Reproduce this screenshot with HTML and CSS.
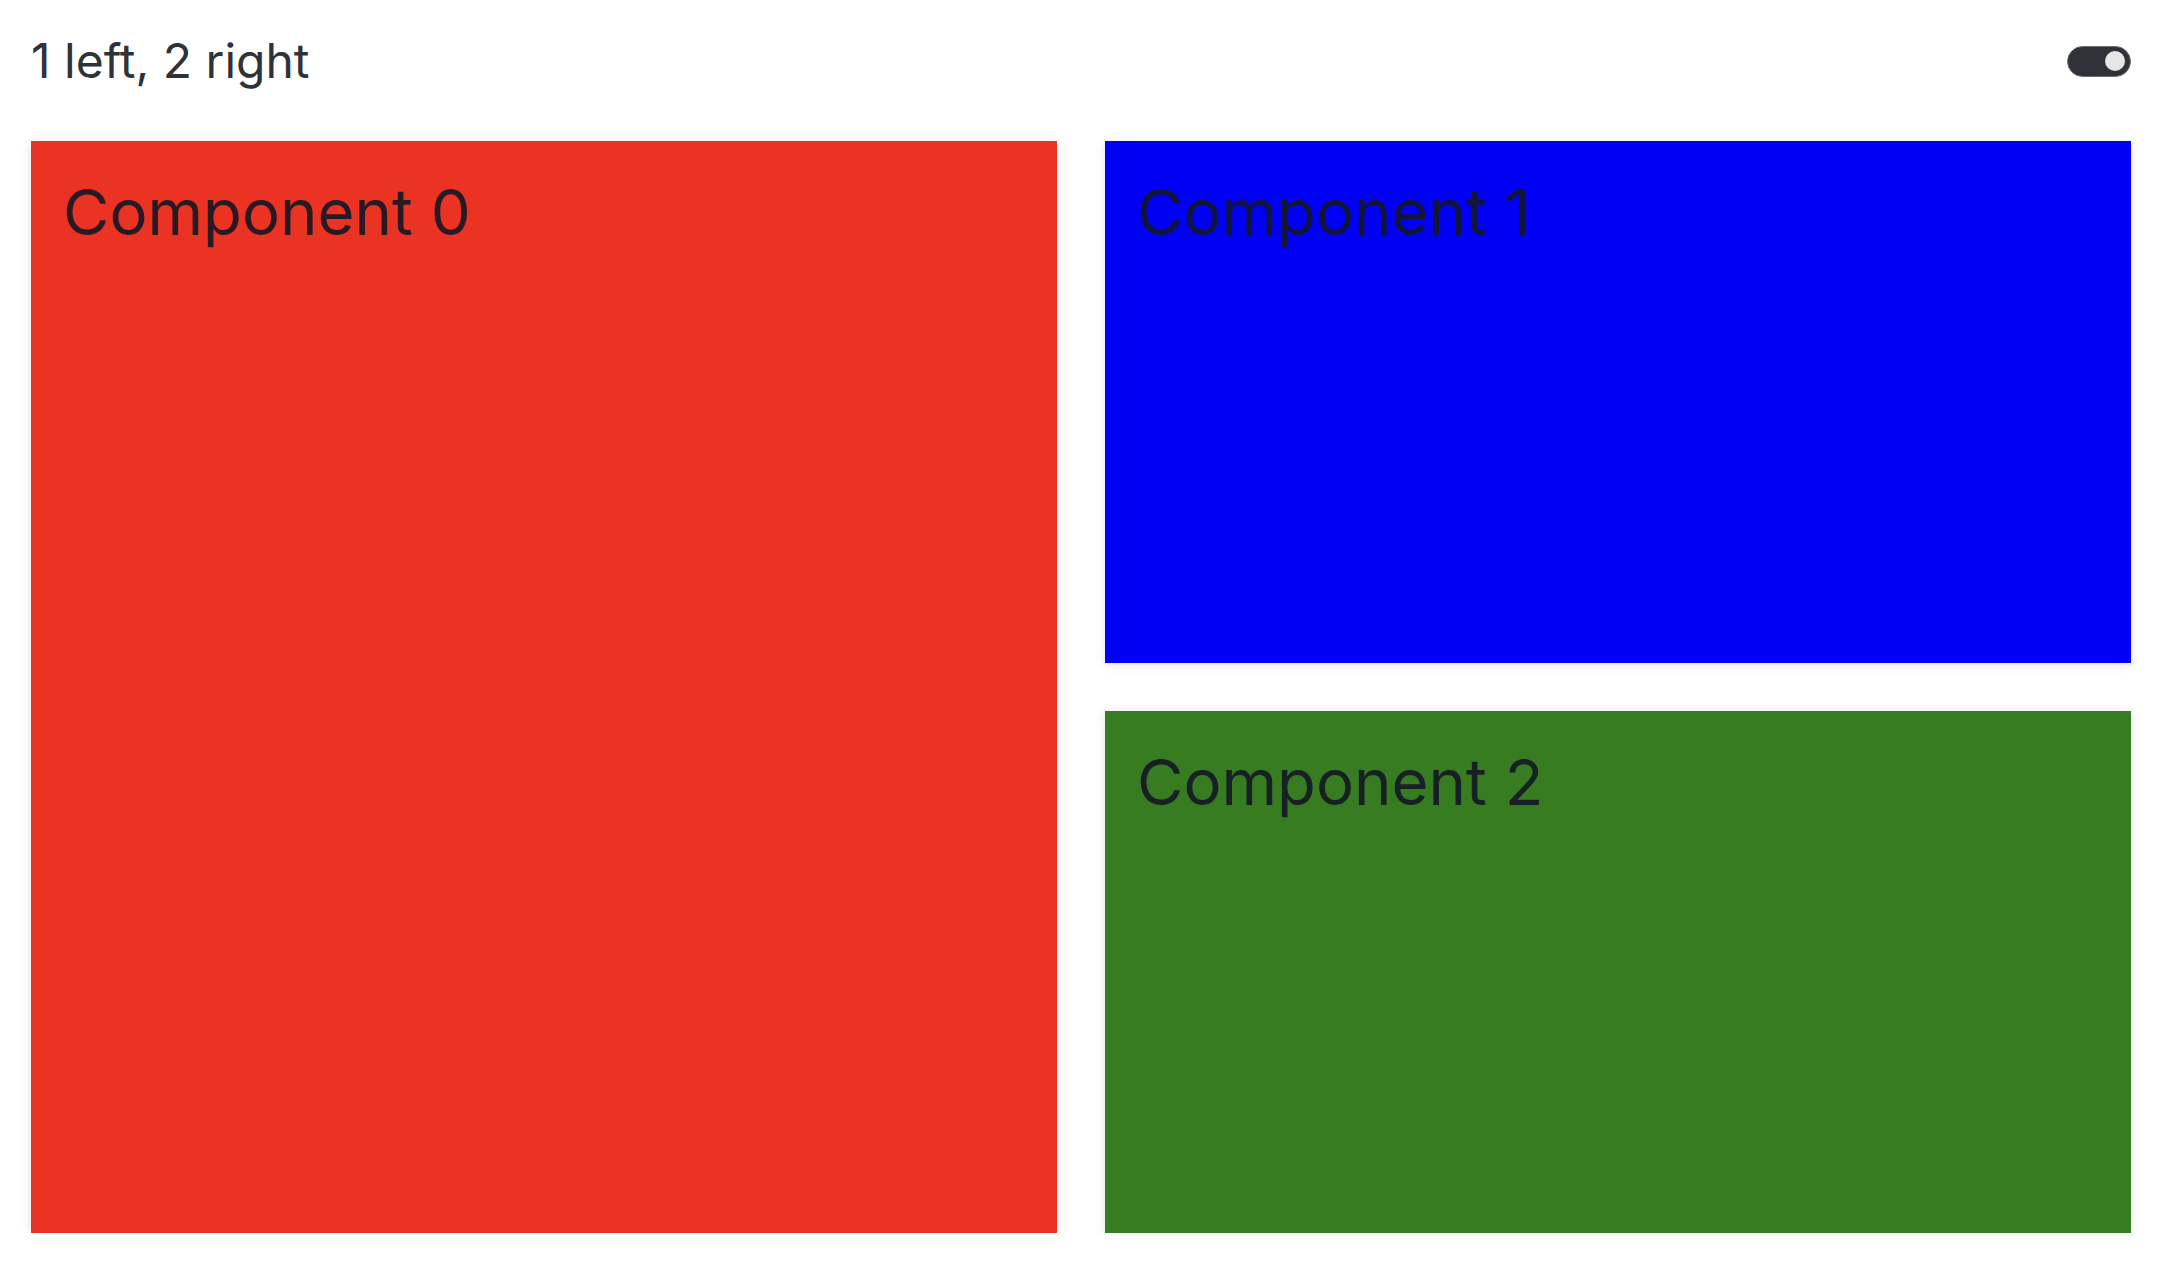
FILE: index.html
```html
<!DOCTYPE html>
<html lang="en">
    <head>
        <meta charset="utf-8"/>
        <title>1 left, 2 right</title>
        <link rel="stylesheet" href="styles.css">
    </head>
    <body>
        <div class="page">
            <div class="topbar">
                <h1 class="title">1 left, 2 right</h1>
                <div class="switch"><span class="knob"></span></div>
            </div>
            <div class="layout">
                <div class="panel red tall">Component 0</div>
                <div class="panel blue">Component 1</div>
                <div class="panel green">Component 2</div>
            </div>
        </div>
    </body>
</html>
```

FILE: styles.css
```css
html, body {
    margin: 0;
    padding: 0;
    background: #ffffff;
}

.page {
    padding: 32px 49px 0 31px;
    font-family: Inter, "Noto Sans", sans-serif;
    color: #2f3238;
}

.topbar {
    display: flex;
    justify-content: space-between;
    align-items: center;
    height: 58px;
    margin-bottom: 51px;
}

.title {
    margin: 0;
    font-size: 48px;
    font-weight: 400;
    line-height: 58px;
}

.switch {
    position: relative;
    width: 62px;
    height: 29px;
    border: 1px solid #6e6f73;
    border-radius: 16px;
    background: #2f3238;
}

.knob {
    position: absolute;
    right: 5px;
    top: 4px;
    width: 20px;
    height: 20px;
    border-radius: 50%;
    background: #e6e6e6;
}

.layout {
    display: grid;
    grid-template-columns: 1026px 1026px;
    grid-template-rows: 522px 522px;
    gap: 48px;
}

.panel {
    padding: 32px;
    font-size: 63.5px;
    line-height: 77px;
    color: rgba(20, 22, 36, 0.9);
    box-shadow: 0 2px 10px rgba(0, 0, 0, 0.12);
}

.tall {
    grid-row: 1 / 3;
}

.red {
    background: #ea3323;
}

.blue {
    background: #0000f5;
}

.green {
    background: #387c22;
}
```
